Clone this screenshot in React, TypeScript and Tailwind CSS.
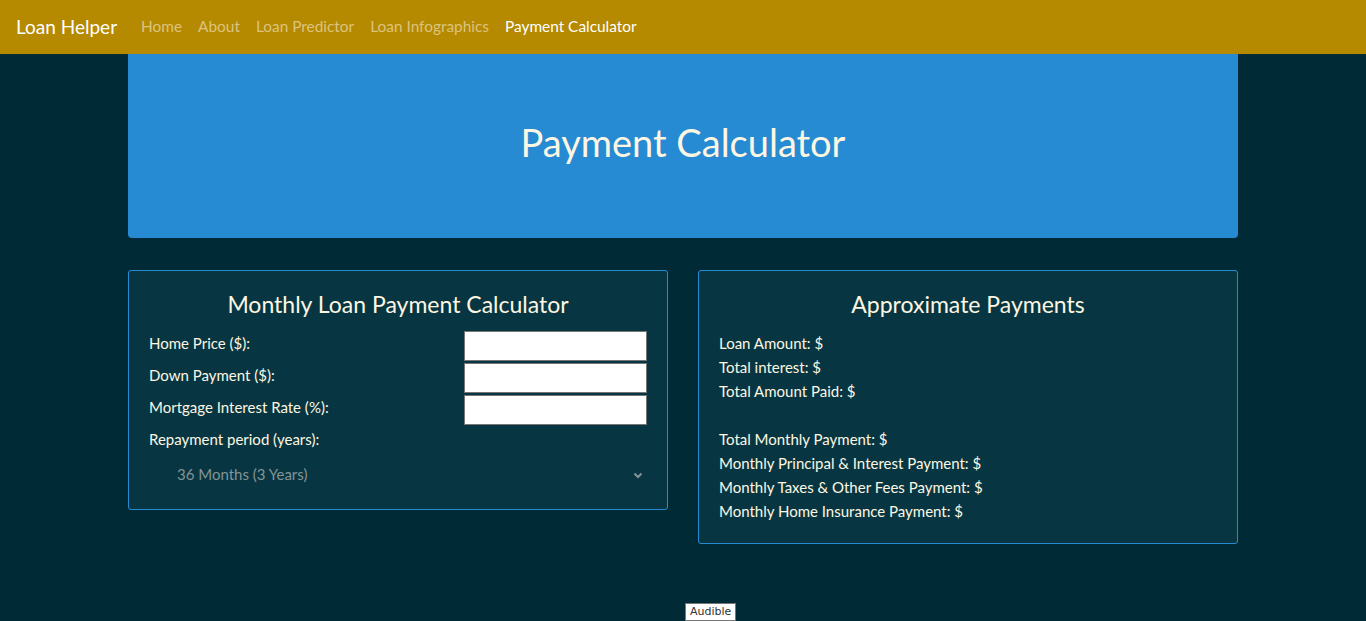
import React from 'react';

const navLinks = ['Home', 'About', 'Loan Predictor', 'Loan Infographics'];

const results = [
  'Loan Amount: $',
  'Total interest: $',
  'Total Amount Paid: $',
  '',
  'Total Monthly Payment: $',
  'Monthly Principal & Interest Payment: $',
  'Monthly Taxes & Other Fees Payment: $',
  'Monthly Home Insurance Payment: $',
];

const fields = ['Home Price ($):', 'Down Payment ($):', 'Mortgage Interest Rate (%):'];

export default function App() {
  return (
    <div className="relative min-h-[621px] bg-[#002b36] text-[#fdf6e3]" style={{ fontFamily: 'Lato, "Noto Sans", sans-serif' }}>
      {/* navbar */}
      <nav className="flex h-[54px] items-center bg-[#b58900] px-4">
        <span className="mr-6 text-[19px] text-white">Loan Helper</span>
        <div className="flex items-center gap-4 text-[15.4px]">
          {navLinks.map(l => (
            <a key={l} className="text-[#dcc47f]">{l}</a>
          ))}
          <a className="text-white">Payment Calculator</a>
        </div>
      </nav>

      <div className="mx-auto w-[1110px]">
        <div className="flex h-[184px] items-center justify-center rounded-b-[4px] bg-[#268bd2] pb-2">
          <h1 className="text-[38px] text-[#fdf6e3]">Payment Calculator</h1>
        </div>

        <div className="mt-8 flex items-start gap-[30px]">
          <div className="w-[540px] rounded-[3px] border border-[#268bd2] bg-[#073642] px-5 pt-[16px] pb-[18px]">
            <h2 className="mb-[9px] text-center text-[23px]">Monthly Loan Payment Calculator</h2>
            <div className="flex flex-col gap-[2px] text-[15px]">
              {fields.map(f => (
                <div key={f} className="flex h-[30px] items-start justify-between">
                  <label className="pt-[1px]">{f}</label>
                  <input className="h-[30px] w-[183px] border border-[#767676] bg-white" />
                </div>
              ))}
              <div className="flex h-[30px] items-start pt-[1px]">Repayment period (years):</div>
              <div className="flex h-[32px] items-center justify-between pl-7 pr-[3px] text-[#839496]">
                <span>36 Months (3 Years)</span>
                <svg width="12" height="12" viewBox="0 0 12 12" fill="none" stroke="#839496" strokeWidth="2">
                  <path d="M2.5 4.5 6 8l3.5-3.5" />
                </svg>
              </div>
            </div>
          </div>

          <div className="w-[540px] rounded-[3px] border border-[#268bd2] bg-[#073642] px-5 pt-[16px] pb-[20px]">
            <h2 className="mb-[9px] text-center text-[23px]">Approximate Payments</h2>
            <div className="text-[15px] leading-[24px]">
              {results.map((r, i) => (
                <div key={i} className="h-[24px]">{r}</div>
              ))}
            </div>
          </div>
        </div>
      </div>

      <div className="absolute left-[685px] top-[603px] border border-[#767676] bg-white px-[4px] text-[11px] leading-[16px] text-[#333]" style={{ fontFamily: '"DejaVu Sans", sans-serif' }}>
        Audible
      </div>
    </div>
  );
}
